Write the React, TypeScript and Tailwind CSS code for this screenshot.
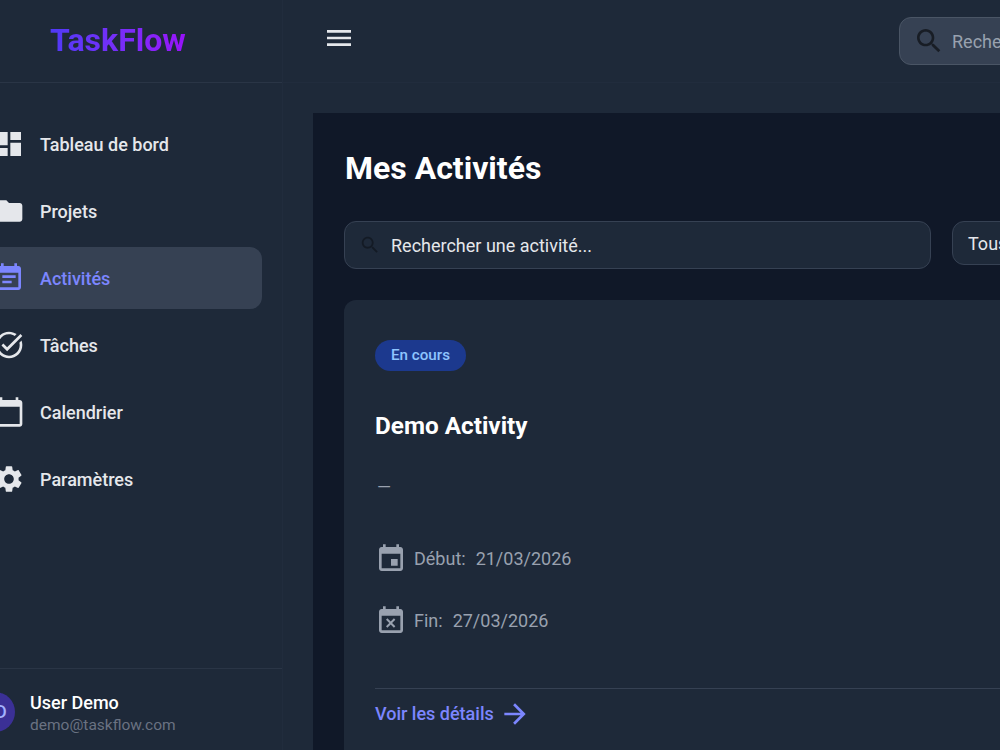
const paths = {
  dashboard: "M3 13h8V3H3v10zm0 8h8v-6H3v6zm10 0h8V11h-8v10zm0-18v6h8V3h-8z",
  folder: "M10 4H4c-1.1 0-1.99.9-1.99 2L2 18c0 1.1.9 2 2 2h16c1.1 0 2-.9 2-2V8c0-1.1-.9-2-2-2h-8l-2-2z",
  eventNote: "M17 10H7v2h10v-2zm2-7h-1V1h-2v2H8V1H6v2H5c-1.11 0-1.99.9-1.99 2L3 19c0 1.1.89 2 2 2h14c1.1 0 2-.9 2-2V5c0-1.1-.9-2-2-2zm0 16H5V8h14v11zm-5-5H7v2h7v-2z",
  taskAlt: "M22 5.18 10.59 16.6l-4.24-4.24 1.41-1.41 2.83 2.83 10-10L22 5.18zm-2.21 5.04c.13.57.21 1.17.21 1.78 0 4.42-3.58 8-8 8s-8-3.58-8-8 3.58-8 8-8c1.58 0 3.04.46 4.28 1.25l1.44-1.44C16.1 2.67 14.13 2 12 2 6.48 2 2 6.48 2 12s4.48 10 10 10 10-4.48 10-10c0-1.19-.22-2.33-.6-3.39l-1.61 1.61z",
  calendar: "M20 3h-1V1h-2v2H7V1H5v2H4c-1.1 0-2 .9-2 2v16c0 1.1.9 2 2 2h16c1.1 0 2-.9 2-2V5c0-1.1-.9-2-2-2zm0 18H4V8h16v13z",
  settings: "M19.14 12.94c.04-.3.06-.61.06-.94 0-.32-.02-.64-.07-.94l2.03-1.58c.18-.14.23-.41.12-.61l-1.92-3.32c-.12-.22-.37-.29-.59-.22l-2.39.96c-.5-.38-1.03-.7-1.62-.94l-.36-2.54c-.04-.24-.24-.41-.48-.41h-3.84c-.24 0-.43.17-.47.41l-.36 2.54c-.59.24-1.13.57-1.62.94l-2.39-.96c-.22-.08-.47 0-.59.22L2.74 8.87c-.12.21-.08.47.12.61l2.03 1.58c-.05.3-.09.63-.09.94s.02.64.07.94l-2.03 1.58c-.18.14-.23.41-.12.61l1.92 3.32c.12.22.37.29.59.22l2.39-.96c.5.38 1.03.7 1.62.94l.36 2.54c.05.24.24.41.48.41h3.84c.24 0 .44-.17.47-.41l.36-2.54c.59-.24 1.13-.56 1.62-.94l2.39.96c.22.08.47 0 .59-.22l1.92-3.32c.12-.22.07-.47-.12-.61l-2.01-1.58zM12 15.6c-1.98 0-3.6-1.62-3.6-3.6s1.62-3.6 3.6-3.6 3.6 1.62 3.6 3.6-1.62 3.6-3.6 3.6z",
  menu: "M3 18h18v-2H3v2zm0-5h18v-2H3v2zm0-7v2h18V6H3z",
  search: "M15.5 14h-.79l-.28-.27C15.41 12.59 16 11.11 16 9.5 16 5.91 13.09 3 9.5 3S3 5.91 3 9.5 5.91 16 9.5 16c1.61 0 3.09-.59 4.23-1.57l.27.28v.79l5 4.99L20.49 19l-4.99-5zm-6 0C7.01 14 5 11.99 5 9.5S7.01 5 9.5 5 14 7.01 14 9.5 11.99 14 9.5 14z",
  event: "M17 12h-5v5h5v-5zM16 1v2H8V1H6v2H5c-1.11 0-1.99.9-1.99 2L3 19c0 1.1.89 2 2 2h14c1.1 0 2-.9 2-2V5c0-1.1-.9-2-2-2h-1V1h-2zm3 18H5V8h14v11z",
  eventBusy: "M9.31 17l2.44-2.44L14.19 17l1.06-1.06-2.44-2.44 2.44-2.44L14.19 10l-2.44 2.44L9.31 10l-1.06 1.06 2.44 2.44-2.44 2.44L9.31 17zM19 3h-1V1h-2v2H8V1H6v2H5c-1.11 0-1.99.9-1.99 2L3 19c0 1.1.89 2 2 2h14c1.1 0 2-.9 2-2V5c0-1.1-.9-2-2-2zm0 16H5V8h14v11z",
  arrow: "M12 4l-1.41 1.41L16.17 11H4v2h12.17l-5.58 5.59L12 20l8-8z",
}

function Icon({ d, className }: { d: string; className: string }) {
  return (
    <svg viewBox="0 0 24 24" fill="currentColor" className={className}>
      <path d={d} />
    </svg>
  )
}

const navItems = [
  { label: "Tableau de bord", icon: paths.dashboard },
  { label: "Projets", icon: paths.folder },
  { label: "Activités", icon: paths.eventNote, active: true },
  { label: "Tâches", icon: paths.taskAlt },
  { label: "Calendrier", icon: paths.calendar },
  { label: "Paramètres", icon: paths.settings },
]

export default function App() {
  return (
    <div className="flex h-[750px] w-[1000px] overflow-hidden bg-gray-800 font-['Roboto',sans-serif]">
      {/* Sidebar */}
      <aside className="ml-[-17px] flex w-[300px] shrink-0 flex-col border-r border-[#212c3d]">
        <div className="flex h-[83px] shrink-0 items-center border-b border-[#2a3546] pb-[2px] pl-[67px]">
          <span className="bg-gradient-to-r from-indigo-600 to-purple-600 bg-clip-text text-[32px] font-bold text-transparent">
            TaskFlow
          </span>
        </div>

        <nav className="flex flex-1 flex-col gap-[5px] pr-[20px] pt-[30px]">
          {navItems.map((item) => (
            <div
              key={item.label}
              className={`flex h-[62px] items-center gap-[15px] rounded-xl pl-[10px] ${
                item.active ? "bg-gray-700 text-indigo-400" : "text-gray-200"
              }`}
            >
              <Icon d={item.icon} className="size-8 shrink-0" />
              <span className="text-[18px] font-medium">{item.label}</span>
            </div>
          ))}
        </nav>

        <div className="flex h-[82px] shrink-0 items-center gap-[15px] border-t border-[#2a3546] pt-[7px]">
          <div className="mt-[-3px] ml-[-8px] flex size-[40px] shrink-0 items-center justify-center rounded-full bg-[#3b3096] text-[18px] font-medium text-indigo-300">
            UD
          </div>
          <div>
            <div className="text-[18px] leading-[24px] font-medium text-white">User Demo</div>
            <div className="text-[15.5px] leading-[20px] text-gray-500">demo@taskflow.com</div>
          </div>
        </div>
      </aside>

      {/* Main column */}
      <div className="flex w-[900px] shrink-0 flex-col">
        <header className="flex h-[83px] shrink-0 items-start border-b border-[#212c3d] pl-[40px]">
          <Icon d={paths.menu} className="mt-[22px] size-8 text-gray-200" />
          <div className="mt-[17px] ml-auto flex h-[48px] w-[284px] items-center gap-[7px] rounded-xl border border-gray-600 bg-gray-700 pl-[13px]">
            <Icon d={paths.search} className="size-8 shrink-0 text-black/55" />
            <span className="text-[18px] text-gray-400">Rechercher...</span>
          </div>
        </header>

        <main className="mt-[30px] ml-[30px] flex-1 bg-gray-900 px-[31px] pt-[35px]">
          <h1 className="pl-px text-[32px] leading-[40px] font-bold text-white">Mes Activités</h1>

          <div className="mt-[33px] flex items-start gap-[21px]">
            <div className="flex h-[48px] w-[587px] shrink-0 items-center gap-[10px] rounded-xl border border-gray-700 bg-gray-800 pl-[14px]">
              <Icon d={paths.search} className="size-[22px] shrink-0 text-black/35" />
              <span className="text-[18px] text-gray-200">Rechercher une activité...</span>
            </div>
            <div className="flex h-[44px] w-[200px] shrink-0 items-center rounded-xl border border-gray-700 bg-gray-800 pl-[15px] text-[18px] text-gray-200">
              Tous les statuts
            </div>
          </div>

          <section className="mt-[31px] h-[500px] rounded-xl bg-gray-800 px-[31px] pt-[40px]">
            <span className="inline-flex h-[31px] items-center rounded-full bg-blue-900 px-[16px] text-[15.2px] font-medium text-blue-300">
              En cours
            </span>
            <h2 className="mt-[37px] text-[24.3px] leading-[36px] font-bold text-white">Demo Activity</h2>
            <p className="mt-[29px] pl-[2px] text-[18px] leading-[27px] text-gray-400">—</p>

            <div className="mt-[43px] flex h-[32px] items-center gap-[7px] text-[18px] text-gray-400">
              <Icon d={paths.event} className="size-8 shrink-0" />
              <span className="mb-[2px]">Début:</span>
              <span className="mb-[2px] ml-[3px]">21/03/2026</span>
            </div>
            <div className="mt-[30px] flex h-[32px] items-center gap-[7px] text-[18px] text-gray-400">
              <Icon d={paths.eventBusy} className="size-8 shrink-0" />
              <span className="mb-[2px]">Fin:</span>
              <span className="mb-[2px] ml-[3px]">27/03/2026</span>
            </div>

            <div className="mt-[51px] flex h-[50px] items-center gap-[5px] border-t border-gray-700 text-[18px] font-medium text-indigo-400">
              <span>Voir les détails</span>
              <Icon d={paths.arrow} className="size-8 shrink-0" />
            </div>
          </section>
        </main>
      </div>
    </div>
  )
}
